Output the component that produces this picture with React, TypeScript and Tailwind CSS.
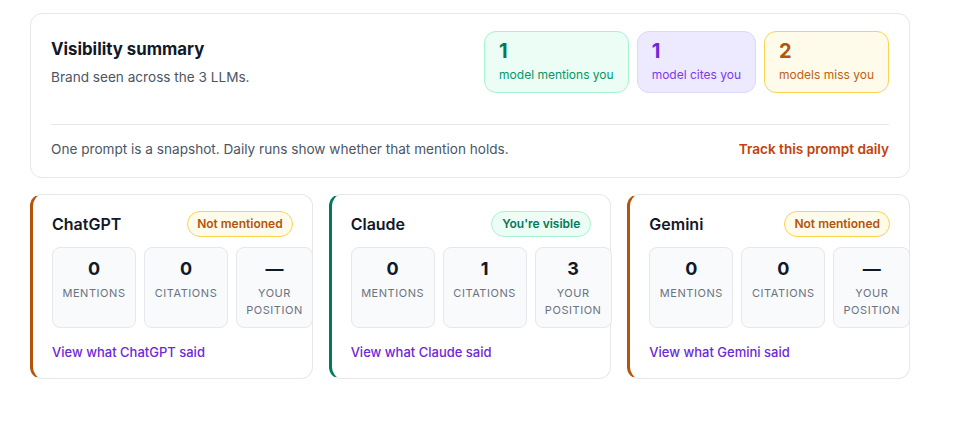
const models = [
  {
    name: "ChatGPT",
    visible: false,
    stats: ["0", "0", "—"],
  },
  {
    name: "Claude",
    visible: true,
    stats: ["0", "1", "3"],
  },
  {
    name: "Gemini",
    visible: false,
    stats: ["0", "0", "—"],
  },
];

function StatTile({ value, label, width }: { value: string; label: string; width: string }) {
  return (
    <div className={`${width} shrink-0 rounded-lg border border-[#e5e7eb] bg-[#f8fafc] pt-[7px] pb-2 flex flex-col items-center`}>
      <div className="text-lg leading-7 font-bold text-[#111827]">{value}</div>
      <div className="mt-[2px] text-[11px] leading-[17px] tracking-wider uppercase text-[#6b7280] text-center">{label}</div>
    </div>
  );
}

function ModelCard({ name, visible, stats }: { name: string; visible: boolean; stats: string[] }) {
  return (
    <div
      className={`rounded-xl border border-[#e5e7eb] border-l-[3px] bg-white pt-4 pb-4 px-[19px] ${
        visible ? "border-l-[#047857]" : "border-l-[#b45309]"
      }`}
    >
      <div className="flex items-center justify-between">
        <h3 className="text-base font-semibold text-[#111827]">{name}</h3>
        {visible ? (
          <span className="rounded-full border border-[#a7f3d0] bg-[#ecfdf5] px-[10px] py-1 text-xs leading-4 font-semibold text-[#047857]">
            You're visible
          </span>
        ) : (
          <span className="rounded-full border border-[#fcd34d] bg-[#fffbeb] px-[9px] py-1 text-xs leading-4 font-semibold text-[#b45309]">
            Not mentioned
          </span>
        )}
      </div>

      <div className="mt-[10px] flex gap-2">
        <StatTile value={stats[0]} label="Mentions" width="w-[84px]" />
        <StatTile value={stats[1]} label="Citations" width="w-[84px]" />
        <StatTile value={stats[2]} label="Your position" width="w-[77px]" />
      </div>

      <a href="#" className="mt-[14px] block text-[13px] leading-5 font-medium text-[#6d28d9]">
        View what {name} said
      </a>
    </div>
  );
}

export default function App() {
  return (
    <div className="min-h-screen bg-white font-['Inter','Noto_Sans',sans-serif]">
      <div className="w-[880px] ml-[30px] pt-[13px]">
        {/* Summary */}
        <div className="rounded-xl border border-[#e5e7eb] bg-white pt-[17px] px-5 pb-[18px]">
          <div className="flex items-start justify-between">
            <div className="pt-[6px]">
              <h2 className="text-[16.8px] leading-6 font-bold text-[#111827]">Visibility summary</h2>
              <p className="mt-[6px] text-[13.6px] leading-5 text-[#4b5563]">Brand seen across the 3 LLMs.</p>
            </div>
            <div className="flex gap-2">
              <div className="rounded-xl border border-[#a7f3d0] bg-[#ecfdf5] px-[14px] pt-[7px] pb-[9px]">
                <div className="text-xl leading-6 font-bold text-[#047857]">1</div>
                <div className="mt-1 text-xs leading-4 text-[#059669]">model mentions you</div>
              </div>
              <div className="rounded-xl border border-[#ddd6fe] bg-[#ede9fe] px-[14px] pt-[7px] pb-[9px]">
                <div className="text-xl leading-6 font-bold text-[#6d28d9]">1</div>
                <div className="mt-1 text-xs leading-4 text-[#7c3aed]">model cites you</div>
              </div>
              <div className="rounded-xl border border-[#fcd34d] bg-[#fffbeb] px-[14px] pt-[7px] pb-[9px]">
                <div className="text-xl leading-6 font-bold text-[#b45309]">2</div>
                <div className="mt-1 text-xs leading-4 text-[#c2600f]">models miss you</div>
              </div>
            </div>
          </div>

          <div className="mt-[31px] border-t border-[#e5e7eb] pt-[14px] flex items-center justify-between">
            <p className="text-[13.6px] leading-5 text-[#4b5563]">
              One prompt is a snapshot. Daily runs show whether that mention holds.
            </p>
            <a href="#" className="text-[13.6px] leading-5 font-semibold text-[#c2410c]">
              Track this prompt daily
            </a>
          </div>
        </div>

        {/* Per-model cards */}
        <div className="mt-4 grid grid-cols-3 gap-4">
          {models.map((m) => (
            <ModelCard key={m.name} {...m} />
          ))}
        </div>
      </div>
    </div>
  );
}
